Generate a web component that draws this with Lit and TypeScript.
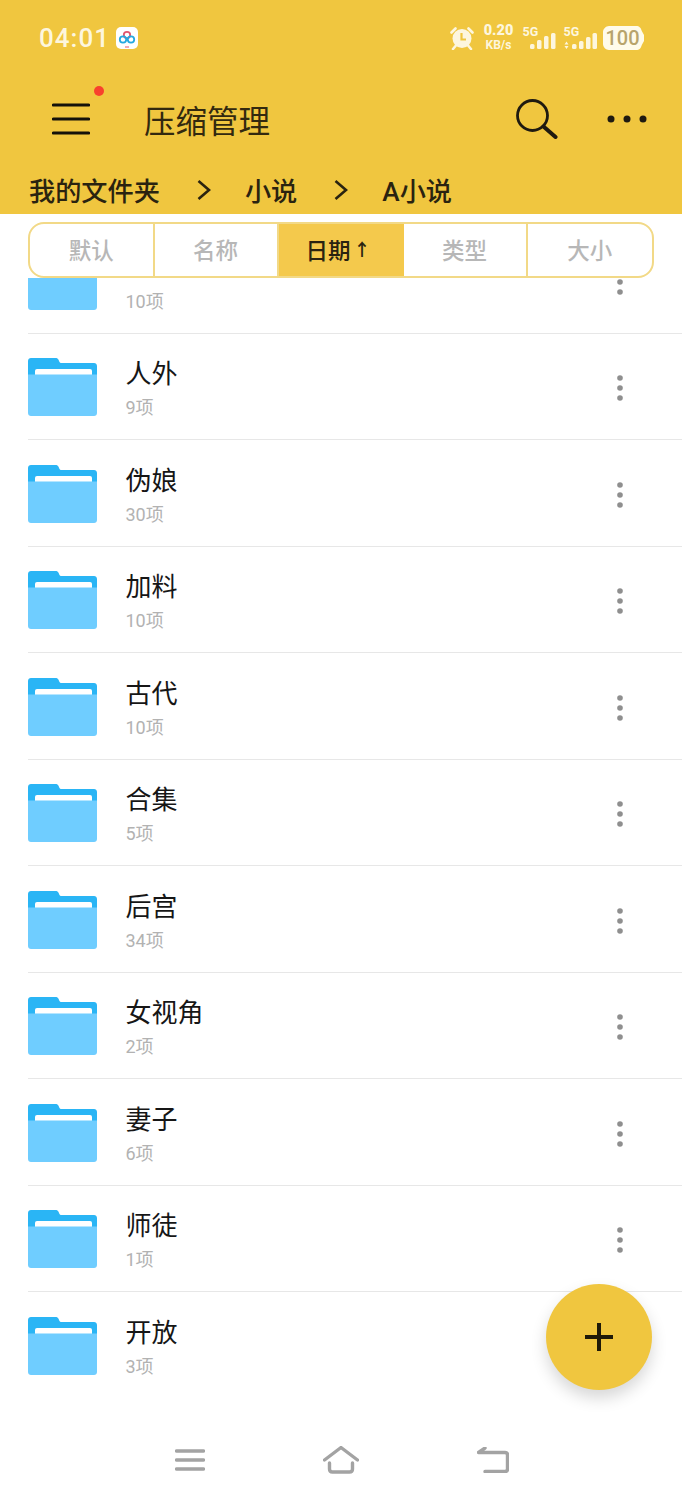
import { LitElement, html, css, svg } from 'lit';
import { customElement } from 'lit/decorators.js';

const FOLDERS = [
  { name: '', count: '10项' },
  { name: '人外', count: '9项' },
  { name: '伪娘', count: '30项' },
  { name: '加料', count: '10项' },
  { name: '古代', count: '10项' },
  { name: '合集', count: '5项' },
  { name: '后宫', count: '34项' },
  { name: '女视角', count: '2项' },
  { name: '妻子', count: '6项' },
  { name: '师徒', count: '1项' },
  { name: '开放', count: '3项' },
];

const TABS = ['默认', '名称', '日期', '类型', '大小'];
const ACTIVE_TAB = 2;

const folderIcon = svg`
  <svg class="folder" width="69" height="58" viewBox="0 0 69 58">
    <path d="M3 0H27.5C29 0 30 .6 30.6 2L31.500 4C31.800 4.700 32.300 5 33 5H66C67.700 5 69 6.300 69 8V30H0V3C0 1.300 1.300 0 3 0Z" fill="#2ab5f5"/>
    <rect x="7" y="11" width="57" height="8" rx="2" fill="#fff"/>
    <path d="M0 16.500H69V55C69 56.700 67.700 58 66 58H3C1.300 58 0 56.700 0 55Z" fill="#6fcdff"/>
  </svg>`;

const kebabIcon = svg`
  <svg class="kebab" width="8" height="28" viewBox="0 0 8 28">
    <circle cx="4" cy="4" r="2.800" fill="#8f8f8f"/>
    <circle cx="4" cy="14" r="2.800" fill="#8f8f8f"/>
    <circle cx="4" cy="24" r="2.800" fill="#8f8f8f"/>
  </svg>`;

const chevron = svg`
  <svg class="chev" width="14" height="22" viewBox="0 0 14 22">
    <path d="M1.500 2L12 11L1.500 20" fill="none" stroke="#2a2310" stroke-width="2.600"/>
  </svg>`;

@customElement('app-root')
export class AppRoot extends LitElement {
  static styles = css`
    :host {
      display: block;
      position: relative;
      width: 682px;
      height: 1500px;
      overflow: hidden;
      background: #fff;
      font-family: 'Roboto', 'Noto Sans CJK SC', sans-serif;
    }

    .header {
      background: #f0c63f;
      height: 214px;
    }

    .status {
      height: 76px;
      display: flex;
      align-items: center;
      padding: 0 38px 0 39px;
      color: #fdf6de;
    }

    .time {
      font-size: 26px;
      font-weight: 500;
      letter-spacing: 1px;
      width: 77px;
    }

    .status-right {
      margin-left: auto;
      display: flex;
      align-items: center;
    }

    .speed {
      display: flex;
      flex-direction: column;
      align-items: center;
      width: 29px;
      font-weight: 700;
      margin: 0 9px 0 10px;
      line-height: 14px;
    }

    .speed b { font-size: 14.500px; }
    .speed span { font-size: 12px; }

    .signal {
      display: block;
      margin-right: 7px;
    }

    .signal.last {
      margin-right: 6px;
    }

    .toolbar {
      height: 86px;
      display: flex;
      align-items: center;
      position: relative;
    }

    .menu {
      margin-left: 52px;
    }

    .menu-dot {
      position: absolute;
      left: 94px;
      top: 10px;
      width: 10px;
      height: 10px;
      border-radius: 50%;
      background: #f8412d;
    }

    .title {
      margin-left: 54px;
      font-size: 31.500px;
      color: #33290f;
    }

    .search {
      margin-left: auto;
      margin-right: 49px;
    }

    .more {
      margin-right: 35px;
    }

    .crumbs {
      height: 52px;
      padding: 4px 0 0 29px;
      box-sizing: border-box;
      display: flex;
      align-items: center;
      font-size: 26.200px;
      font-weight: 500;
      color: #2a2310;
    }

    .chev {
      margin: 0 34px 0 37px;
    }

    .tabs {
      margin: 8px 28px 0;
      height: 56px;
      box-sizing: border-box;
      border: 2px solid #f2d987;
      border-radius: 16px;
      display: grid;
      grid-template-columns: 124.500px 124px 125px 124px 1fr;
      overflow: hidden;
    }

    .tab {
      display: flex;
      align-items: center;
      justify-content: center;
      padding-bottom: 3px;
      font-size: 22.500px;
      font-weight: 500;
      color: #b7b7b7;
      border-right: 2px solid #f2d987;
    }

    .tab:last-child {
      border-right: none;
    }

    .tab.active {
      background: #f4c94c;
      color: #2a2310;
      border-right-color: #f4c94c;
      padding-right: 4px;
    }

    .arrow {
      font-size: 17px;
      font-weight: 700;
      margin-left: 3px;
    }

    .list {
      height: 1120px;
      overflow: hidden;
    }

    .row {
      height: 106.500px;
      box-sizing: border-box;
      margin-left: 28px;
      padding-right: 58px;
      border-bottom: 1.500px solid #e7e7e7;
      display: flex;
      align-items: center;
    }

    .row:first-child {
      margin-top: -51px;
    }

    .text {
      margin-left: 28.500px;
      padding-top: 4px;
      flex: 1;
    }

    .name {
      font-size: 26px;
      line-height: 36px;
      height: 36px;
      color: #161616;
    }

    .count {
      font-size: 18px;
      line-height: 24px;
      margin-top: 4px;
      color: #b2b2b2;
    }

    .folder, .kebab {
      display: block;
      flex: none;
    }

    .folder {
      margin-top: 2px;
    }

    .kebab {
      margin-top: 4px;
    }

    .nav {
      height: 102px;
      box-sizing: border-box;
      padding-top: 22px;
      display: flex;
      justify-content: center;
      align-items: center;
    }

    .nav-cell {
      width: 151.500px;
      display: flex;
      justify-content: center;
    }

    .fab {
      position: absolute;
      left: 546px;
      top: 1284px;
      width: 106px;
      height: 106px;
      border-radius: 50%;
      background: #f0c63f;
      box-shadow: 0 8px 16px rgba(0, 0, 0, 0.16);
      display: flex;
      align-items: center;
      justify-content: center;
    }
  `;

  render() {
    return html`
      <div class="header">
        <div class="status">
          <span class="time">04:01</span>
          <svg width="22" height="22" viewBox="0 0 22 22">
            <rect width="22" height="22" rx="5" fill="#fff"/>
            <circle cx="11" cy="8" r="3.200" fill="none" stroke="#e2566f" stroke-width="1.800"/>
            <circle cx="7" cy="12.500" r="3.200" fill="none" stroke="#25a9e0" stroke-width="1.800"/>
            <circle cx="15" cy="12.500" r="3.200" fill="none" stroke="#25a9e0" stroke-width="1.800"/>
            <path d="M9 20H13" stroke="#e2566f" stroke-width="1"/>
          </svg>
          <div class="status-right">
            <svg width="24" height="24" viewBox="0 0 24 24">
              <circle cx="12" cy="12.500" r="9.500" fill="#fdf6de"/>
              <path d="M11.500 7V13.500H16" fill="none" stroke="#f0c63f" stroke-width="2.200"/>
              <path d="M1.500 6.500L5.500 2.500M22.500 6.500L18.500 2.500M5.500 20L3 23M18.500 20L21 23" stroke="#fdf6de" stroke-width="2.600" stroke-linecap="round"/>
            </svg>
            <div class="speed"><b>0.20</b><span>KB/s</span></div>
            <svg class="signal" width="34" height="26" viewBox="0 0 34 26">
              <text x="0.500" y="11" font-size="12.500" font-weight="700" fill="#fdf6de">5G</text>
              <rect x="8" y="19" width="4.500" height="5" rx="1.500" fill="#fdf6de"/>
              <rect x="15" y="15" width="4.500" height="9" rx="1.500" fill="#fdf6de"/>
              <rect x="22" y="11" width="4.500" height="13" rx="1.500" fill="#fdf6de"/>
              <rect x="29" y="8" width="4.500" height="16" rx="1.500" fill="#fdf6de"/>
            </svg>
            <svg class="signal last" width="34" height="26" viewBox="0 0 34 26">
              <text x="0.500" y="11" font-size="12.500" font-weight="700" fill="#fdf6de">5G</text>
              <path d="M3.500 16.500L5.500 19.500H1.500ZM3.500 24L5.500 21H1.500Z" fill="#fdf6de"/>
              <rect x="9" y="19" width="4.500" height="5" rx="1.500" fill="#fdf6de"/>
              <rect x="16" y="16" width="4.500" height="8" rx="1.500" fill="#fdf6de"/>
              <rect x="23" y="12" width="4.500" height="12" rx="1.500" fill="#fdf6de"/>
              <rect x="29.500" y="8" width="4.500" height="16" rx="1.500" fill="#fdf6de"/>
            </svg>
            <svg width="41" height="24" viewBox="0 0 41 24">
              <path d="M6 0H33C36.500 0 38 2 38.800 5L41 9V15L38.800 19C38 22 36.500 24 33 24H6C3 24 0 21 0 18V6C0 3 3 0 6 0Z" fill="#fffbea"/>
              <text x="19.500" y="19" text-anchor="middle" font-size="20" font-weight="500" fill="#b8a46c">100</text>
            </svg>
          </div>
        </div>
        <div class="toolbar">
          <svg class="menu" width="38" height="32" viewBox="0 0 38 32">
            <path d="M1.500 2H36.500M1.500 16H36.500M1.500 30H36.500" stroke="#14110a" stroke-width="3.200" stroke-linecap="round"/>
          </svg>
          <span class="menu-dot"></span>
          <span class="title">压缩管理</span>
          <svg class="search" width="42" height="40" viewBox="0 0 42 40">
            <circle cx="16.500" cy="16.500" r="15" fill="none" stroke="#1f1a10" stroke-width="2.800"/>
            <path d="M27.500 27.500L39.500 38" stroke="#1f1a10" stroke-width="4" stroke-linecap="round"/>
          </svg>
          <svg class="more" width="40" height="8" viewBox="0 0 40 8">
            <circle cx="4" cy="4" r="3.500" fill="#1f1a10"/>
            <circle cx="20" cy="4" r="3.500" fill="#1f1a10"/>
            <circle cx="36" cy="4" r="3.500" fill="#1f1a10"/>
          </svg>
        </div>
        <div class="crumbs">
          <span>我的文件夹</span>${chevron}<span>小说</span>${chevron}<span>A小说</span>
        </div>
      </div>

      <div class="tabs">
        ${TABS.map((t, i) =>
          i === ACTIVE_TAB
            ? html`<div class="tab active">${t}<span class="arrow">↑</span></div>`
            : html`<div class="tab">${t}</div>`
        )}
      </div>

      <div class="list">
        ${FOLDERS.map(
          (f) => html`
            <div class="row">
              ${folderIcon}
              <div class="text">
                <div class="name">${f.name}</div>
                <div class="count">${f.count}</div>
              </div>
              ${kebabIcon}
            </div>
          `
        )}
      </div>

      <div class="nav">
        <div class="nav-cell">
          <svg width="30" height="22" viewBox="0 0 30 22">
            <path d="M1.500 2H28.500M1.500 11H28.500M1.500 20H28.500" stroke="#a3a3a3" stroke-width="3.400" stroke-linecap="round"/>
          </svg>
        </div>
        <div class="nav-cell">
          <svg width="36" height="28" viewBox="0 0 36 28">
            <path d="M1.500 14L18 1.500L34.500 14" fill="none" stroke="#a3a3a3" stroke-width="3.400" stroke-linecap="round" stroke-linejoin="round"/>
            <path d="M6.500 17V23C6.500 25 7.500 26 9.500 26H26.500C28.500 26 29.500 25 29.500 23V17" fill="none" stroke="#a3a3a3" stroke-width="3.400" stroke-linecap="round"/>
          </svg>
        </div>
        <div class="nav-cell">
          <svg width="32" height="26" viewBox="0 0 32 26">
            <path d="M8 1L1.500 5.500H28C29.500 5.500 30.500 6.500 30.500 8V22C30.500 23.500 29.500 24.500 28 24.500H8" fill="none" stroke="#a3a3a3" stroke-width="3.400" stroke-linecap="round" stroke-linejoin="round"/>
          </svg>
        </div>
      </div>

      <div class="fab">
        <svg width="28" height="28" viewBox="0 0 28 28">
          <path d="M14 0V28M0 14H28" stroke="#1f1a08" stroke-width="4"/>
        </svg>
      </div>
    `;
  }
}

declare global {
  interface HTMLElementTagNameMap {
    'app-root': AppRoot;
  }
}
